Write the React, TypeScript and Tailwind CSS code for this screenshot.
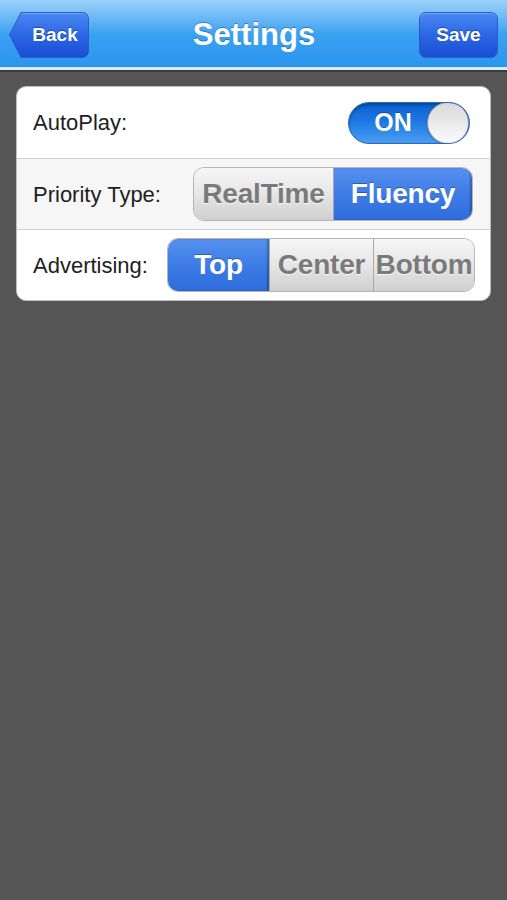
import React, { useState } from 'react';

const font = { fontFamily: '"Liberation Sans", Arial, sans-serif' };

function NavButton({ label, back }: { label: string; back?: boolean }) {
  return (
    <div className="relative flex h-[46px] items-stretch">
      {back && (
        <svg width="14" height="46" viewBox="0 0 14 46" className="-mr-px">
          <defs>
            <linearGradient id="bk" x1="0" y1="0" x2="0" y2="1">
              <stop offset="0" stopColor="#4a88f2" />
              <stop offset="0.5" stopColor="#2c66e4" />
              <stop offset="1" stopColor="#1a4ed4" />
            </linearGradient>
          </defs>
          <path d="M14 0.5 L12 0.5 L0.5 23 L12 45.5 L14 45.5 Z" fill="url(#bk)" stroke="#2a5bc8" strokeWidth="1" />
        </svg>
      )}
      <div
        className={`flex items-center justify-center border border-[#2a5bc8] bg-gradient-to-b from-[#4a88f2] via-[#2c66e4] to-[#1a4ed4] text-[19px] font-bold text-white shadow-[inset_0_1px_0_rgba(255,255,255,0.25)] ${
          back ? 'w-[67px] rounded-r-[7px] border-l-0' : 'w-[79px] rounded-[7px]'
        }`}
      >
        <span className="[text-shadow:0_-1px_0_rgba(0,0,0,0.35)]">{label}</span>
      </div>
    </div>
  );
}

function Toggle({ on }: { on: boolean }) {
  return (
    <div className="relative flex h-[42px] w-[122px] items-center overflow-hidden rounded-full border border-[#2a6bc0] bg-gradient-to-b from-[#0a5fcf] via-[#1f7be6] to-[#4a9df0] shadow-[inset_0_2px_3px_rgba(0,0,0,0.3)]">
      <span className="w-[80px] pl-2 text-center text-[25px] font-bold text-white [text-shadow:0_-1px_0_rgba(0,0,0,0.3)]">
        {on ? 'ON' : 'OFF'}
      </span>
      <div className="absolute right-0 top-[-1px] h-[42px] w-[42px] rounded-full border border-[#9a9a9a] bg-gradient-to-b from-[#d9d9d9] to-[#fbfbfb] shadow-[0_1px_2px_rgba(0,0,0,0.3)]" />
    </div>
  );
}

function Segmented({ items, selected, widths }: { items: string[]; selected: number; widths: string[] }) {
  return (
    <div className="flex h-[54px] overflow-hidden rounded-[11px] border border-[#b5b5b5]">
      {items.map((item, i) => (
        <div
          key={item}
          className={`flex items-center justify-center whitespace-nowrap text-[28px] font-bold tracking-[-0.2px] ${widths[i]} ${
            i > 0 ? 'border-l border-[#a8a8a8]' : ''
          } ${
            i === selected
              ? 'bg-gradient-to-b from-[#5591ee] via-[#3d7ce6] to-[#2f6cdc] text-white shadow-[inset_-2px_0_2px_rgba(0,0,0,0.25)] [text-shadow:0_-1px_0_rgba(0,0,0,0.3)]'
              : 'bg-gradient-to-b from-[#f6f6f6] via-[#e6e6e6] to-[#cfcfcf] text-[#7a7a7a] [text-shadow:0_1px_0_rgba(255,255,255,0.8)]'
          }`}
        >
          {item}
        </div>
      ))}
    </div>
  );
}

export default function App() {
  const [autoPlay] = useState(true);

  return (
    <div className="flex min-h-[900px] w-full flex-col bg-[#555555]" style={font}>
      {/* Navigation bar */}
      <header className="flex h-[70px] items-center justify-between border-b-[3px] border-[#d8ecfa] bg-gradient-to-b from-[#9ad1fa] via-[#3aa2f2] to-[#2b95ee] px-[9px] pt-[3px]">
        <NavButton label="Back" back />
        <h1 className="text-[31px] font-bold text-white [text-shadow:0_-1px_0_rgba(0,0,0,0.3)]">Settings</h1>
        <NavButton label="Save" />
      </header>
      <div className="h-[2px] bg-[#3b3b3b]" />

      {/* Settings card */}
      <main className="px-[16px] pt-[14px]">
        <div className="overflow-hidden rounded-[10px] border border-[#bdbdbd] bg-white">
          <div className="flex h-[71px] items-center justify-between pl-[16px] pr-[20px]">
            <span className="text-[22px] text-[#1e1e1e]">AutoPlay:</span>
            <Toggle on={autoPlay} />
          </div>
          <div className="flex h-[71px] items-center justify-between border-t border-[#cfcfcf] bg-[#f6f6f6] pl-[16px] pr-[17px]">
            <span className="text-[22px] text-[#1e1e1e]">Priority Type:</span>
            <Segmented items={['RealTime', 'Fluency']} selected={1} widths={['w-[139px]', 'w-[139px]']} />
          </div>
          <div className="flex h-[71px] items-center justify-between border-t border-[#cfcfcf] pl-[16px] pr-[15px]">
            <span className="text-[22px] text-[#1e1e1e]">Advertising:</span>
            <Segmented items={['Top', 'Center', 'Bottom']} selected={0} widths={['w-[101px]', 'w-[104px]', 'w-[101px]']} />
          </div>
        </div>
      </main>
    </div>
  );
}
